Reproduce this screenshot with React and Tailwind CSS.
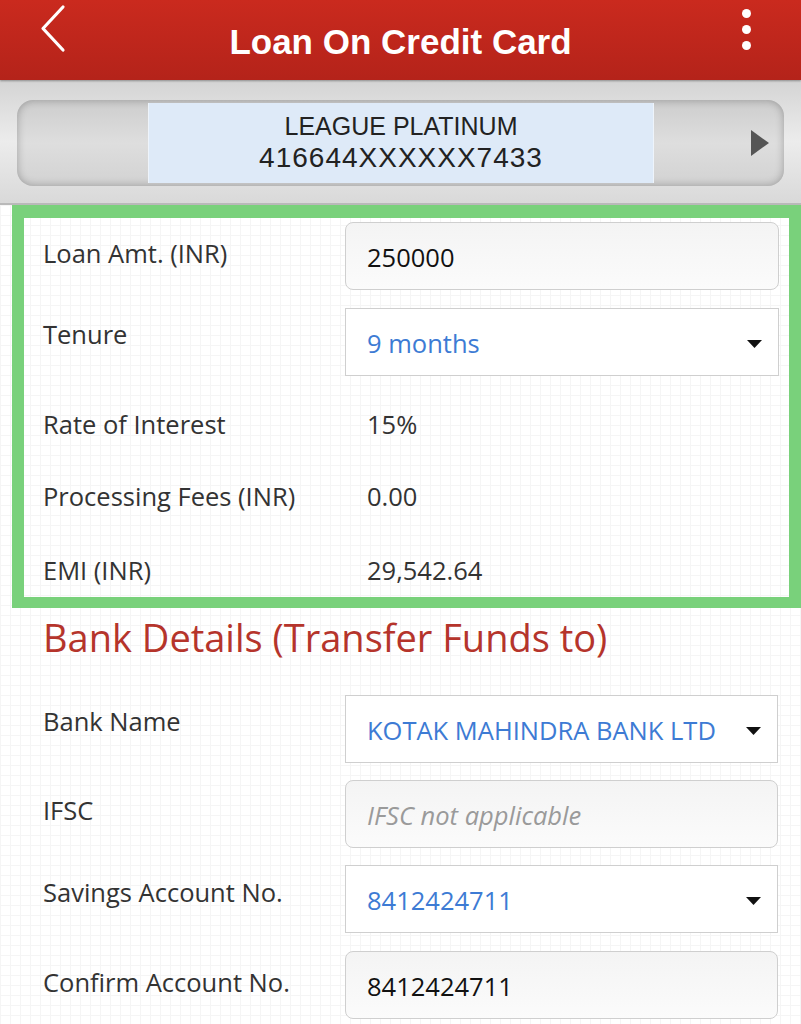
const grid =
  "bg-[linear-gradient(to_right,#f5f5f5_1px,transparent_1px),linear-gradient(to_bottom,#f5f5f5_1px,transparent_1px)] bg-[size:10px_10px]";

function Caret() {
  return (
    <svg width="15" height="8" viewBox="0 0 15 8" className="shrink-0">
      <path d="M0 0 L15 0 L7.5 8 Z" fill="#111" />
    </svg>
  );
}

// one form row: label on the left, field on the right
function FieldRow({ label, labelTop, children, className = '' }) {
  return (
    <div className={`flex items-start ${className}`}>
      <div
        className="w-[302px] shrink-0 text-[25.5px] leading-[34px] text-[#333]"
        style={{ paddingTop: labelTop }}
      >
        {label}
      </div>
      <div className="flex-1">{children}</div>
    </div>
  );
}

function TextBox({ value, placeholder }) {
  return (
    <div className="h-[68px] rounded-[8px] border border-[#cfcfcf] bg-gradient-to-b from-[#f4f4f4] to-[#fbfbfb] pl-[21px] pt-[17px]">
      {placeholder ? (
        <span className="text-[25.5px] leading-[34px] italic text-[#9a9a9a]">{placeholder}</span>
      ) : (
        <span className="text-[25.5px] leading-[34px] text-[#111]">{value}</span>
      )}
    </div>
  );
}

function SelectBox({ value }) {
  return (
    <div className="h-[68px] border border-[#cfcfcf] bg-white pl-[21px] pr-[16px] pt-[17px] flex items-start justify-between">
      <span className="text-[25.5px] leading-[34px] text-[#3d7bd4]">{value}</span>
      <div className="pt-[14px]">
        <Caret />
      </div>
    </div>
  );
}

function StaticRow({ label, value, className }) {
  return (
    <div className={`flex text-[25.5px] leading-[34px] text-[#333] ${className}`}>
      <div className="w-[302px] shrink-0">{label}</div>
      <div className="pl-[22px]">{value}</div>
    </div>
  );
}

export default function App() {
  return (
    <div className="w-[801px] h-[1024px] overflow-hidden bg-white font-['Open_Sans',sans-serif]">
      {/* top bar */}
      <header className="relative h-[80px] bg-gradient-to-b from-[#ca2a1e] to-[#b4231a] flex items-center justify-center shadow-[0_1px_2px_rgba(0,0,0,0.35)] z-10">
        <svg width="30" height="50" viewBox="0 0 30 50" className="absolute left-[38px] top-[4px]">
          <path d="M25 3 L5 24.5 L25 46" stroke="white" strokeWidth="3.2" fill="none" strokeLinecap="round" strokeLinejoin="round" />
        </svg>
        <h1 className="font-['Liberation_Sans',Arial,sans-serif] font-bold text-[35px] leading-none text-white pt-[2px]">
          Loan On Credit Card
        </h1>
        <div className="absolute left-[742px] top-[9px] flex flex-col gap-[7px]">
          <span className="w-[9px] h-[9px] rounded-full bg-white" />
          <span className="w-[9px] h-[9px] rounded-full bg-white" />
          <span className="w-[9px] h-[9px] rounded-full bg-white" />
        </div>
      </header>

      {/* card picker */}
      <div className="h-[125px] bg-gradient-to-b from-[#d4d4d4] via-[#ececec] to-[#d9d9d9] border-b-2 border-[#b9b9b9] px-[17px] pt-[20px]">
        <div className="h-[86px] rounded-[16px] bg-gradient-to-b from-[#cdcdcd] via-[#dedede] to-[#d2d2d2] shadow-[inset_0_0_8px_rgba(0,0,0,0.28)] flex overflow-hidden">
          <div className="w-[131px] shrink-0" />
          <div className="flex-1 my-[3px] bg-[#deeaf8] border-x border-[#eef4fb] flex flex-col items-center justify-center font-['Liberation_Sans',Arial,sans-serif] text-[#222]">
            <div className="text-[25px] leading-[30px]">LEAGUE PLATINUM</div>
            <div className="text-[28px] leading-[34px] tracking-[1px]">416644XXXXXX7433</div>
          </div>
          <div className="w-[130px] shrink-0 flex items-center pl-[97px]">
            <svg width="18" height="26" viewBox="0 0 18 26">
              <path d="M0 0 L18 13 L0 26 Z" fill="#555" />
            </svg>
          </div>
        </div>
      </div>

      <div className={`${grid} h-full`}>
        {/* loan summary */}
        <div className="ml-[12px] border-[12px] border-t-[13px] border-b-[11px] border-[#79d17b] pl-[19px] pr-[10px] pt-[4px] pb-[10px]">
          <FieldRow label="Loan Amt. (INR)" labelTop={14}>
            <TextBox value="250000" />
          </FieldRow>
          <FieldRow label="Tenure" labelTop={9} className="mt-[18px]">
            <SelectBox value="9 months" />
          </FieldRow>
          <StaticRow label="Rate of Interest" value="15%" className="mt-[31px]" />
          <StaticRow label="Processing Fees (INR)" value="0.00" className="mt-[38px]" />
          <StaticRow label="EMI (INR)" value="29,542.64" className="mt-[40px]" />
        </div>

        {/* bank details */}
        <div className="pl-[43px] pr-[23px]">
          <h2 className="mt-[5px] text-[38px] leading-[48px] text-[#b5342b]">Bank Details (Transfer Funds to)</h2>
          <FieldRow label="Bank Name" labelTop={9} className="mt-[34px]">
            <SelectBox value="KOTAK MAHINDRA BANK LTD" />
          </FieldRow>
          <FieldRow label="IFSC" labelTop={13} className="mt-[17px]">
            <TextBox placeholder="IFSC not applicable" />
          </FieldRow>
          <FieldRow label="Savings Account No." labelTop={10} className="mt-[17px]">
            <SelectBox value="8412424711" />
          </FieldRow>
          <FieldRow label="Confirm Account No." labelTop={14} className="mt-[18px]">
            <TextBox value="8412424711" />
          </FieldRow>
        </div>
      </div>
    </div>
  );
}
